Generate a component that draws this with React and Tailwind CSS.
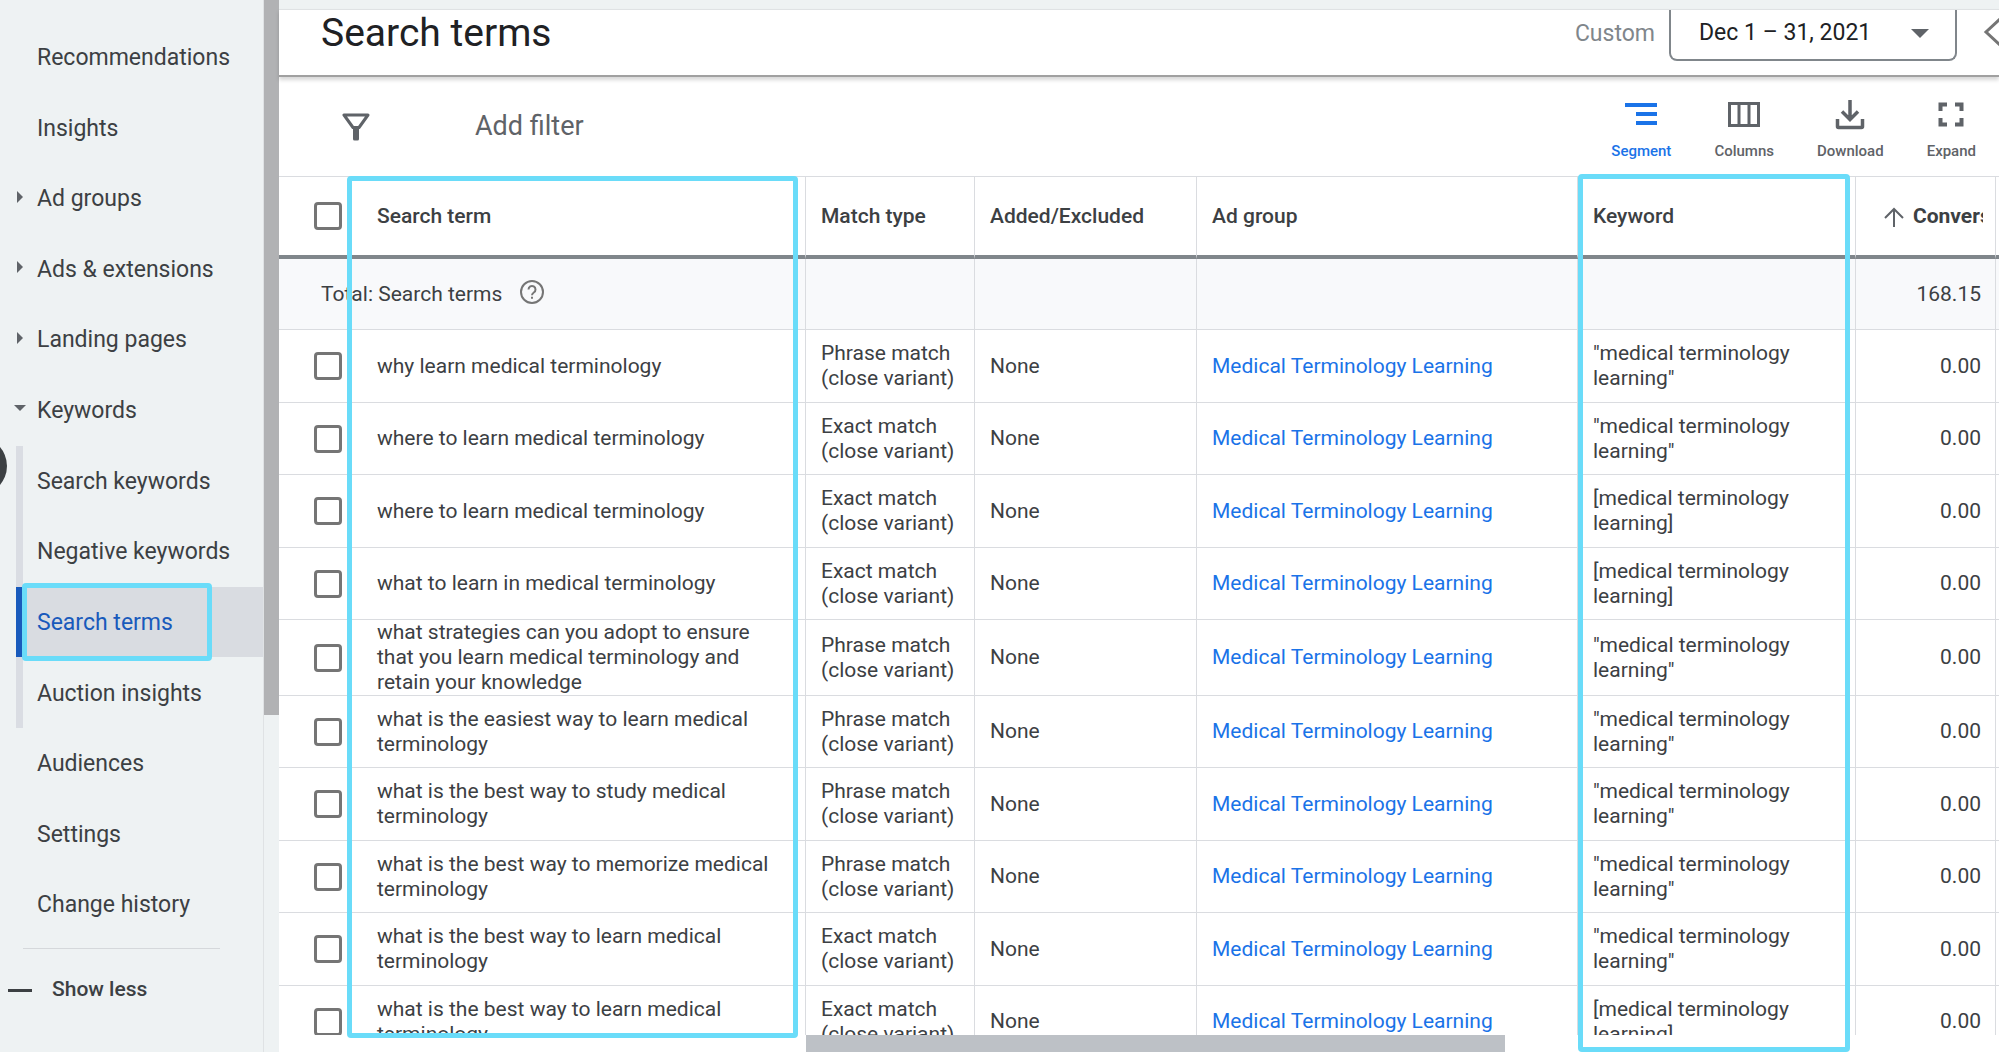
const navItems = [
  { label: "Recommendations" },
  { label: "Insights" },
  { label: "Ad groups", arrow: "right" },
  { label: "Ads & extensions", arrow: "right" },
  { label: "Landing pages", arrow: "right" },
  { label: "Keywords", arrow: "down" },
  { label: "Search keywords", sub: true },
  { label: "Negative keywords", sub: true },
  { label: "Search terms", sub: true, active: true },
  { label: "Auction insights", sub: true },
  { label: "Audiences" },
  { label: "Settings" },
  { label: "Change history" },
];

const rows = [
  ["why learn medical terminology", "Phrase match", '"medical terminology learning"'],
  ["where to learn medical terminology", "Exact match", '"medical terminology learning"'],
  ["where to learn medical terminology", "Exact match", "[medical terminology learning]"],
  ["what to learn in medical terminology", "Exact match", "[medical terminology learning]"],
  [
    "what strategies can you adopt to ensure that you learn medical terminology and retain your knowledge",
    "Phrase match",
    '"medical terminology learning"',
  ],
  ["what is the easiest way to learn medical terminology", "Phrase match", '"medical terminology learning"'],
  ["what is the best way to study medical terminology", "Phrase match", '"medical terminology learning"'],
  ["what is the best way to memorize medical terminology", "Phrase match", '"medical terminology learning"'],
  ["what is the best way to learn medical terminology", "Exact match", '"medical terminology learning"'],
  ["what is the best way to learn medical terminology", "Exact match", "[medical terminology learning]"],
];

function Arrow({ dir }) {
  return dir === "right" ? (
    <svg viewBox="0 0 6 12" className="w-[6px] h-3 mb-[6px]" fill="#5f6368">
      <path d="M0 0l6 6-6 6z" />
    </svg>
  ) : (
    <svg viewBox="0 0 12 6" className="w-3 h-[6px] mb-[6px]" fill="#5f6368">
      <path d="M0 0h12l-6 6z" />
    </svg>
  );
}

function NavItem({ item }) {
  return (
    <li className="flex-1 flex pl-4">
      <a
        href="#"
        className={
          item.active
            ? "relative flex flex-1 items-center pt-[2px] bg-[#d9dce1] border-l-7 border-[#185abc] text-[#185abc]"
            : item.sub
              ? "flex flex-1 items-center pt-[2px] border-l-7 border-[#dadde3]"
              : "flex flex-1 items-center pt-[2px]"
        }
      >
        {!item.sub && (
          <span className="w-[21px] -ml-[7px] mr-[7px] flex justify-center">
            {item.arrow && <Arrow dir={item.arrow} />}
          </span>
        )}
        <span className={item.sub ? "pl-[14px]" : ""}>{item.label}</span>
        {item.active && (
          <span className="absolute -left-px -top-1 -bottom-1 w-[190px] border-5 border-[#6adcf9] rounded-sm" />
        )}
      </a>
    </li>
  );
}

function Sidebar() {
  return (
    <aside className="relative w-[279px] shrink-0 flex bg-[#eef2f3] text-[#3c4043] overflow-hidden">
      <div className="flex-1 pt-[22px] border-r border-[#dfe2e4]">
        <ul className="flex flex-col h-[918px] text-[23px]">
          {navItems.map((item) => (
            <NavItem key={item.label} item={item} />
          ))}
        </ul>
        <hr className="mt-2 ml-[23px] mr-[43px] border-[#d5d8db]" />
        <button className="flex items-center mt-[25px] h-8 pl-2 gap-5 text-[21px] font-medium">
          <span className="w-6 h-[3px] bg-[#3c4043]" />
          Show less
        </button>
      </div>
      <div className="w-[15px]">
        <div className="h-[715px] bg-[#b1b2b4]" />
      </div>
      <span className="absolute -left-[51px] top-[437px] size-[58px] rounded-full bg-[#3c4043]" />
    </aside>
  );
}

function Header() {
  return (
    <header className="relative z-10 flex items-start justify-between h-[68px] bg-white border-t border-t-[#dfe2e4] border-b-2 border-b-[#a0a0a0] shadow-[0_3px_4px_rgba(0,0,0,0.16)] pl-[42px] overflow-hidden">
      <h1 className="text-[39px] leading-[46px] text-[#202124]">Search terms</h1>
      <div className="flex items-start">
        <span className="mt-2 mr-[14px] text-[23px] leading-8 text-[#80868b]">Custom</span>
        <button className="flex items-center justify-between w-[288px] h-[51px] pl-7 pr-[26px] pb-[3px] border-2 border-t-0 border-[#80868b] rounded-b-lg text-[23px] text-[#202124]">
          Dec 1 – 31, 2021
          <svg viewBox="0 0 18 9" className="w-[18px] h-[9px]" fill="#5f6368">
            <path d="M0 0h18l-9 9z" />
          </svg>
        </button>
        <button aria-label="Previous period" className="mt-2 ml-[26px] w-4 overflow-hidden">
          <svg viewBox="0 0 16 28" className="w-4 h-7" fill="none" stroke="#757575" strokeWidth="3">
            <path d="M17 1L3 14l14 13" />
          </svg>
        </button>
      </div>
    </header>
  );
}

function Tool({ label, active, children }) {
  return (
    <button
      className={
        active
          ? "flex flex-col items-center gap-2 text-[15px] leading-5 font-medium text-[#1a73e8]"
          : "flex flex-col items-center gap-2 text-[15px] leading-5 font-medium text-[#5f6368]"
      }
    >
      <svg viewBox="0 0 36 36" className="size-9" fill="none" stroke="currentColor" strokeWidth="4">
        {children}
      </svg>
      {label}
    </button>
  );
}

function Toolbar() {
  return (
    <div className="flex items-center justify-between h-[99px] pl-[63px] pr-[23px]">
      <div className="flex items-center">
        <svg viewBox="0 0 28 28" className="size-7" fill="none" stroke="#5f6368" strokeWidth="3" strokeLinejoin="round">
          <path d="M2 2h24l-9 12.500H11z" />
          <path d="M12.500 14.500h3v11.500h-3z" fill="#5f6368" />
        </svg>
        <button className="ml-[105px] text-[27px] text-[#5f6368]">Add filter</button>
      </div>
      <div className="flex gap-[43px] pt-1">
        <Tool label="Segment" active>
          <path d="M2 8h32M13 17h21M13 26h21" />
        </Tool>
        <Tool label="Columns">
          <path strokeWidth="3" d="M3.500 6.500h29v22h-29zM13 6v23M23 6v23" />
        </Tool>
        <Tool label="Download">
          <path strokeWidth="3.500" d="M18 3v19M10 14.500l8 8 8-8M5.500 22v7.500q0 1 1 1h23q1 0 1-1V22" />
        </Tool>
        <Tool label="Expand">
          <path d="M7.500 14V7.500H14M22 7.500h6.500V14M28.500 21v6.500H22M14 27.500H7.500V21" />
        </Tool>
      </div>
    </div>
  );
}

function Check({ label }) {
  return (
    <input
      type="checkbox"
      aria-label={label}
      className="block appearance-none ml-[35px] size-7 border-3 border-[#757575] rounded-sm bg-white"
    />
  );
}

function ResultsTable() {
  const th = "border-b-4 border-b-[#80868b] border-r border-r-[#dadce0] pl-[15px] font-medium";
  const td = "border-b border-r border-[#dadce0] pl-[15px]";
  return (
    <table className="w-full table-fixed border-separate border-spacing-0 text-left text-[21px] leading-[25px] text-[#3c4043]">
      <colgroup>
        <col className="w-[83px]" />
        <col className="w-[444px]" />
        <col className="w-[169px]" />
        <col className="w-[222px]" />
        <col />
        <col className="w-[278px]" />
        <col className="w-[140px]" />
        <col className="w-[3px]" />
      </colgroup>
      <thead>
        <tr className="h-[82px]">
          <th className="border-b-4 border-[#80868b]">
            <Check label="Select all" />
          </th>
          <th className={th}>Search term</th>
          <th className={th}>Match type</th>
          <th className={th}>Added/Excluded</th>
          <th className={th}>Ad group</th>
          <th className={th}>Keyword</th>
          <th className="border-b-4 border-b-[#80868b] border-r border-r-[#dadce0] pl-7 pr-3 font-bold">
            <div className="flex items-center gap-[9px] overflow-hidden">
              <svg viewBox="0 0 20 24" className="w-5 h-6 shrink-0" fill="none" stroke="#5f6368" strokeWidth="2">
                <path d="M10 23V5M1 14l9-9 9 9" />
              </svg>
              Conversions
            </div>
          </th>
          <th className="border-b-4 border-[#80868b]" />
        </tr>
      </thead>
      <tbody>
        <tr className="h-[71px] bg-[#f8f9fb]">
          <td colSpan={2} className="border-b border-r border-[#dadce0] pl-[42px]">
            <div className="flex items-center gap-[18px]">
              Total: Search terms
              <svg viewBox="0 0 24 24" className="size-6 mb-1" fill="none" stroke="#757575" strokeWidth="2">
                <circle cx="12" cy="12" r="11" />
                <path d="M8.500 9.500a3.500 3.500 0 1 1 5.300 3c-1.200.8-1.800 1.300-1.800 2.700M12 16.800v2" />
              </svg>
            </div>
          </td>
          <td className={td} />
          <td className={td} />
          <td className={td} />
          <td className={td} />
          <td className="border-b border-r border-[#dadce0] pr-[14px] text-right">168.15</td>
          <td className="border-b border-[#dadce0]" />
        </tr>
        {rows.map(([term, match, keyword], i) => (
          <tr key={i} className="even:h-[73px] odd:h-[72px]">
            <td className="border-b border-[#dadce0]">
              <Check label={term} />
            </td>
            <td className="border-b border-r border-[#dadce0] pl-[15px] pr-6">{term}</td>
            <td className={td}>
              {match}
              <br />
              (close variant)
            </td>
            <td className={td}>None</td>
            <td className={td}>
              <a href="#" className="text-[#1a73e8]">
                Medical Terminology Learning
              </a>
            </td>
            <td className="border-b border-r border-[#dadce0] pl-[15px] pr-10">{keyword}</td>
            <td className="border-b border-r border-[#dadce0] pr-[14px] text-right">0.00</td>
            <td className="border-b border-[#dadce0]" />
          </tr>
        ))}
      </tbody>
    </table>
  );
}

export default function App() {
  return (
    <div className="flex h-screen overflow-hidden bg-white font-[Roboto,sans-serif]">
      <Sidebar />
      <main className="flex-1 min-w-0 flex flex-col">
        <div className="h-[9px] shrink-0 bg-[#eef2f3]" />
        <Header />
        <Toolbar />
        <section className="relative flex-1 min-h-0 flex flex-col border-t border-[#dadce0]">
          <div className="flex-1 min-h-0 overflow-hidden">
            <ResultsTable />
          </div>
          <div className="h-[17px] shrink-0 pl-[527px]">
            <div className="w-[699px] h-full bg-[#bdc1c6]" />
          </div>
          {/* column highlights */}
          <div className="pointer-events-none absolute left-[68px] -top-px bottom-[14px] w-[451px] border-5 border-[#6adcf9] rounded-sm" />
          <div className="pointer-events-none absolute right-[149px] -top-[3px] bottom-0 w-[272px] border-5 border-[#6adcf9] rounded-sm" />
        </section>
      </main>
    </div>
  );
}
